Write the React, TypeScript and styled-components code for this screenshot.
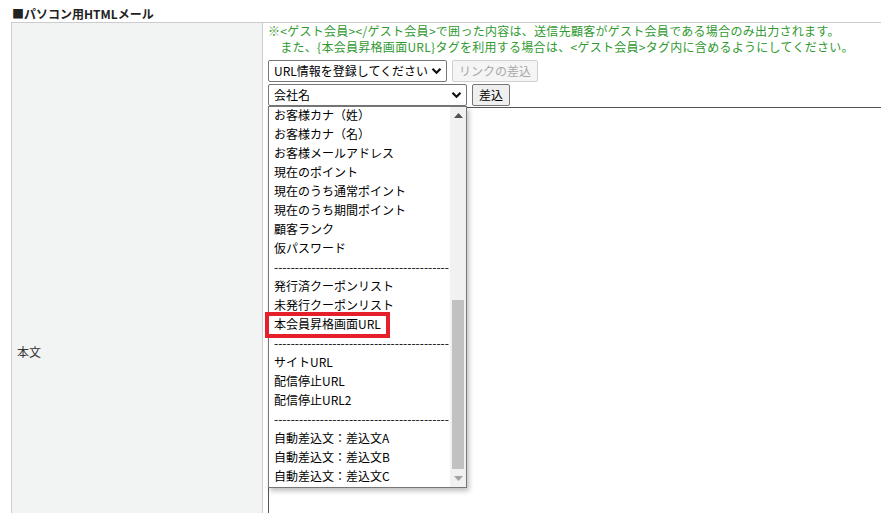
import React from "react";
import styled, { createGlobalStyle } from "styled-components";

const GlobalStyle = createGlobalStyle`
  html, body {
    margin: 0;
    padding: 0;
    background: #ffffff;
    overflow: hidden;
  }
  body {
    font-family: "Noto Sans CJK JP", "Noto Sans", sans-serif;
    font-size: 12px;
    color: #222;
  }
`;

const Page = styled.div`
  width: 1000px;
  padding: 6px 0 0 11px;
`;

const Title = styled.div`
  font-weight: bold;
  font-size: 12px;
  line-height: 16px;
  color: #222;
  padding-left: 1px;
`;

const Table = styled.div`
  display: grid;
  grid-template-columns: 251px 1fr;
  border-top: 1px solid #cccccc;
  border-left: 1px solid #cccccc;
`;

const LabelCell = styled.div`
  background: #f2f3f3;
  border-right: 1px solid #cccccc;
  display: flex;
  align-items: center;
  padding-left: 5px;
  color: #333;
  font-size: 12px;
`;

const ContentCell = styled.div`
  padding: 0 0 6px 5px;
  display: flex;
  flex-direction: column;
`;

const Notes = styled.div`
  margin-bottom: 5px;
`;

const Note = styled.div`
  color: #2f9a2f;
  font-size: 12px;
  line-height: 16px;
  letter-spacing: 0.28px;
  white-space: pre;
`;

const Row = styled.div<{ $gap: number }>`
  position: relative;
  display: flex;
  align-items: flex-start;
  gap: 5px;
  margin-bottom: ${(p) => p.$gap}px;
`;

const SelectBox = styled.div<{ $width: number }>`
  box-sizing: border-box;
  width: ${(p) => p.$width}px;
  height: 22px;
  border: 1px solid #767676;
  border-radius: 2px;
  background: #fff;
  display: flex;
  align-items: center;
  justify-content: space-between;
  padding: 0 4px 1px 5px;
  font-size: 12px;
  color: #000;
`;

const Button = styled.div<{ $disabled?: boolean }>`
  box-sizing: border-box;
  height: 22px;
  padding: 0 6px 1px;
  display: flex;
  align-items: center;
  border-radius: 2px;
  font-size: 12px;
  border: 1px solid ${(p) => (p.$disabled ? "#d0d0d0" : "#767676")};
  background: ${(p) => (p.$disabled ? "#f5f5f5" : "#efefef")};
  color: ${(p) => (p.$disabled ? "#a8a8a8" : "#000")};
`;

const TextArea = styled.div`
  box-sizing: border-box;
  width: 800px;
  height: 566px;
  border: 1px solid #555;
  border-right: none;
  background: #fff;
`;

const Popup = styled.div`
  position: absolute;
  top: 22px;
  left: 0;
  width: 199px;
  box-sizing: border-box;
  border: 1px solid #767676;
  background: #fff;
  box-shadow: 2px 3px 5px rgba(0, 0, 0, 0.25);
  display: flex;
  z-index: 5;
`;

const List = styled.div`
  flex: 1;
  min-width: 0;
`;

const Item = styled.div`
  position: relative;
  box-sizing: border-box;
  height: 19px;
  line-height: 15px;
  padding: 0 0 4px 5px;
  font-size: 12px;
  color: #000;
  white-space: nowrap;
`;

const Mark = styled.span`
  position: absolute;
  left: -4px;
  top: -4px;
  width: 125px;
  height: 26px;
  box-sizing: border-box;
  border: 4px solid #e5202a;
  pointer-events: none;
`;

const Track = styled.div`
  width: 16px;
  background: #f1f1f1;
  display: flex;
  flex-direction: column;
  align-items: center;
`;

const Arrow = styled.div`
  height: 17px;
  width: 16px;
  display: flex;
  align-items: center;
  justify-content: center;
`;

const TrackSpace = styled.div`
  flex: 1;
  width: 100%;
  display: flex;
  flex-direction: column;
  justify-content: flex-end;
  align-items: center;
  padding-bottom: 1px;
`;

const Thumb = styled.div`
  width: 12px;
  height: 169px;
  background: #c1c1c1;
`;

const Chevron = () => (
  <svg width="11" height="8" viewBox="0 0 11 8">
    <path d="M1.5 1.8 L5.5 5.8 L9.5 1.8" fill="none" stroke="#111" strokeWidth="2.2" />
  </svg>
);

const Tri = ({ up, color }: { up?: boolean; color: string }) => (
  <svg width="9" height="5" viewBox="0 0 9 5">
    <path d={up ? "M0 5 L4.5 0 L9 5 Z" : "M0 0 L4.5 5 L9 0 Z"} fill={color} />
  </svg>
);

const SEP = "-".repeat(42);

const items: string[] = [
  "お客様カナ（姓）",
  "お客様カナ（名）",
  "お客様メールアドレス",
  "現在のポイント",
  "現在のうち通常ポイント",
  "現在のうち期間ポイント",
  "顧客ランク",
  "仮パスワード",
  SEP,
  "発行済クーポンリスト",
  "未発行クーポンリスト",
  "本会員昇格画面URL",
  SEP,
  "サイトURL",
  "配信停止URL",
  "配信停止URL2",
  SEP,
  "自動差込文：差込文A",
  "自動差込文：差込文B",
  "自動差込文：差込文C",
];

export default function App() {
  return (
    <>
      <GlobalStyle />
      <Page>
        <Title>■パソコン用HTMLメール</Title>
        <Table>
          <LabelCell>本文</LabelCell>
          <ContentCell>
            <Notes>
              <Note>※&lt;ゲスト会員&gt;&lt;/ゲスト会員&gt;で囲った内容は、送信先顧客がゲスト会員である場合のみ出力されます。</Note>
              <Note>{"　また、{本会員昇格画面URL}タグを利用する場合は、<ゲスト会員>タグ内に含めるようにしてください。"}</Note>
            </Notes>
            <Row $gap={2}>
              <SelectBox $width={179}>
                <span>URL情報を登録してください</span>
                <Chevron />
              </SelectBox>
              <Button $disabled>リンクの差込</Button>
            </Row>
            <Row $gap={1}>
              <SelectBox $width={199}>
                <span>会社名</span>
                <Chevron />
              </SelectBox>
              <Button>差込</Button>
              <Popup>
                <List>
                  {items.map((t, i) => (
                    <Item key={i}>
                      {t}
                      {i === 11 && <Mark />}
                    </Item>
                  ))}
                </List>
                <Track>
                  <Arrow>
                    <Tri up color="#505050" />
                  </Arrow>
                  <TrackSpace>
                    <Thumb />
                  </TrackSpace>
                  <Arrow>
                    <Tri color="#a3a3a3" />
                  </Arrow>
                </Track>
              </Popup>
            </Row>
            <TextArea />
          </ContentCell>
        </Table>
      </Page>
    </>
  );
}
